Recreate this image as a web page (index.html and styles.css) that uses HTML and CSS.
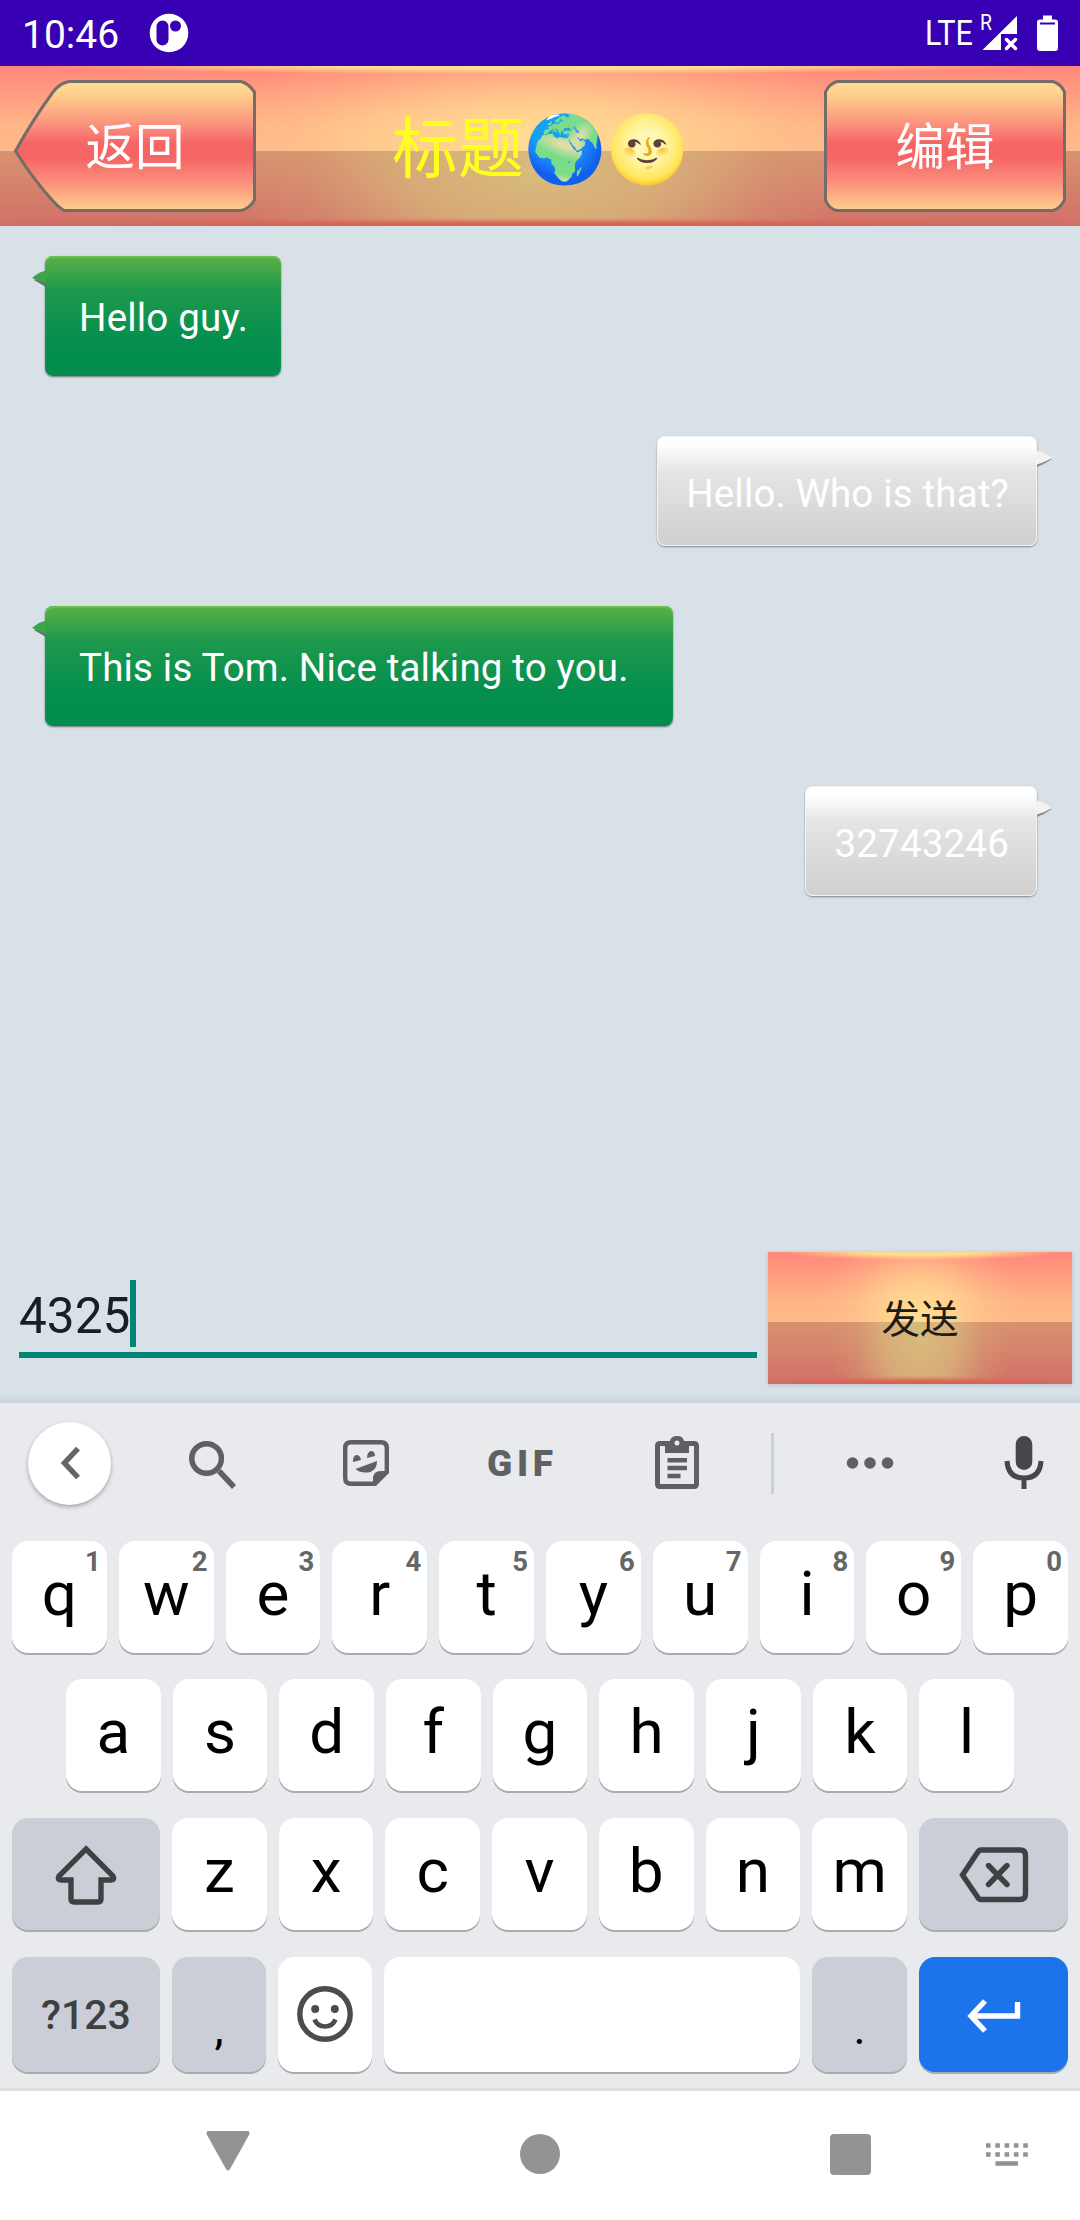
FILE: index.html
```html
<!DOCTYPE html>
<html lang="zh">
<head>
<meta charset="utf-8">
<title>标题</title>
<link rel="stylesheet" href="styles.css">
</head>
<body>
<div class="screen">
  <div class="status">
    <span class="clock">10:46</span>
    <svg class="app-icon" width="40" height="40" viewBox="0 0 40 40"><path fill="#fff" fill-rule="evenodd" d="M20 .7a19.3 19.3 0 1 0 0 38.600a19.300 19.300 0 1 0 0-38.600zM13.500 7.500a6 6 0 0 1 6 6v13a6 6 0 0 1-12 0v-13a6 6 0 0 1 6-6zM26.500 7.500a5.500 5.500 0 1 1 0 11a5.500 5.500 0 1 1 0-11z"/></svg>
    <svg class="status-right" width="144" height="66" viewBox="0 0 144 66" fill="#fff">
      <text x="1" y="44.500" font-size="34.500" textLength="48" lengthAdjust="spacingAndGlyphs">LTE</text>
      <text x="56" y="30" font-size="22" textLength="12" lengthAdjust="spacingAndGlyphs">R</text>
      <path d="M93 16V34H77V50H58.500z"/>
      <path d="M82.500 39.500l9 9m0-9l-9 9" stroke="#fff" stroke-width="3.500" stroke-linecap="round"/>
      <path d="M119 15.500h9v4h3q3 0 3 3V48q0 3-3 3h-15q-3 0-3-3V22.500q0-3 3-3h3z"/>
      <path d="M116 22.500h15v2h-15z" fill="#3700b3"/>
    </svg>
  </div>

  <div class="header glow">
    <div class="head-btn">
      <svg class="btn-shape" width="242" height="132" viewBox="0 0 242 132">
        <defs><linearGradient id="warm" x1="0" y1="0" x2="0" y2="1">
          <stop offset="0" stop-color="#ffd892"/><stop offset=".07" stop-color="#ffd68f"/><stop offset=".2" stop-color="#fdb586"/><stop offset=".35" stop-color="#fb8d7b"/><stop offset=".48" stop-color="#f56565"/><stop offset=".59" stop-color="#f56565"/><stop offset=".78" stop-color="#fb8f7c"/><stop offset="1" stop-color="#ffd08d"/>
        </linearGradient></defs>
        <path d="M55 1.500H227Q234 3 240.500 12V120Q235 129 227 130.500H50Q44 127 38 120Q16 95 1.500 71Q18 41 39 12Q46 3 55 1.500z" fill="url(#warm)" stroke="#736c68" stroke-width="3"/>
      </svg>
      <span class="btn-label">返回</span>
    </div>
    <div class="title"><span>标题</span>
      <span class="emoji">🌍</span><span class="emoji">🌝</span>
    </div>
    <div class="head-btn">
      <svg class="btn-shape" width="242" height="132" viewBox="0 0 242 132">
        <path d="M13 1.500H229Q237 4 240.500 12V120Q236 129 229 130.500H13Q5 129 1.500 120V12Q5 4 13 1.500z" fill="url(#warm)" stroke="#736c68" stroke-width="3"/>
      </svg>
      <span class="btn-label">编辑</span>
    </div>
  </div>

  <div class="chat">
    <div class="bubble in"><svg class="tail" width="15" height="18" viewBox="0 0 15 18"><path d="M15 3Q5 9 3 10L15 17z" fill="#66706c"/><path d="M15 1Q9 1 1 8L15 14z" fill="#3da449"/></svg>Hello guy.</div>
    <div class="bubble out"><svg class="tail" width="16" height="18" viewBox="0 0 16 18"><path d="M0 4L15 9Q8 14 0 17z" fill="#8b8f93"/><path d="M0 1Q7 2 15 8Q8 12 0 14.500z" fill="#f3f3f3"/></svg>Hello. Who is that?</div>
    <div class="bubble in long"><svg class="tail" width="15" height="18" viewBox="0 0 15 18"><path d="M15 3Q5 9 3 10L15 17z" fill="#66706c"/><path d="M15 1Q9 1 1 8L15 14z" fill="#3da449"/></svg>This is Tom. Nice talking to you.</div>
    <div class="bubble out"><svg class="tail" width="16" height="18" viewBox="0 0 16 18"><path d="M0 4L15 9Q8 14 0 17z" fill="#8b8f93"/><path d="M0 1Q7 2 15 8Q8 12 0 14.500z" fill="#f3f3f3"/></svg>32743246</div>
  </div>

  <div class="composer">
    <div class="input"><span>4325</span><i class="caret"></i></div>
    <div class="send glow">发送</div>
  </div>

  <div class="keyboard">
    <div class="tools">
      <div class="collapse"><svg width="24" height="36" viewBox="0 0 24 36"><path d="M20 3.500L6.500 18L20 32.500" fill="none" stroke="#666" stroke-width="5.500"/></svg></div>
      <svg width="50" height="52" viewBox="0 0 50 52" fill="none" stroke="#5f6062"><circle cx="18.600" cy="21.500" r="14.800" stroke-width="5.500"/><path d="M31 34L46 50" stroke-width="5.500"/></svg>
      <svg width="46" height="46" viewBox="0 0 46 46"><path d="M8 2.200H38Q43.800 2.200 43.800 8V32L32 43.800H8Q2.200 43.800 2.200 38V8Q2.200 2.200 8 2.200z" fill="none" stroke="#5f6062" stroke-width="4.400"/><path d="M30 45V39Q30 31 38 31H45L32 45z" fill="#5f6062"/><path d="M10 22Q9.500 16 13.500 15Q17 15 18 20zM24 18Q24 12 28 11Q32 11 32 16zM12.500 29L34 21Q34 29 27.500 32Q18 34 12.500 29z" fill="#5f6062"/></svg>
      <svg width="66" height="36" viewBox="0 0 66 36"><text class="gif" x="0" y="31" font-size="37" textLength="66" lengthAdjust="spacing">GIF</text></svg>
      <svg width="44" height="54" viewBox="0 0 44 54"><path fill-rule="evenodd" fill="#5f6062" d="M5 5H15Q16 0 22 0T29 5H39Q44 5 44 10V48Q44 53 39 53H5Q0 53 0 48V10Q0 5 5 5zM5 10V48H39V10H34V17H10V10zM22 4.500a2.500 2.500 0 1 0 0 5a2.500 2.500 0 1 0 0-5z"/><path d="M12.500 24.200H32M12.500 32H32M12.500 40H25.500" stroke="#5f6062" stroke-width="4.600"/></svg>
      <i class="divider"></i>
      <svg width="48" height="14" viewBox="0 0 48 14" fill="#5f6062"><circle cx="6.500" cy="7" r="5.800"/><circle cx="24" cy="7" r="5.800"/><circle cx="41.500" cy="7" r="5.800"/></svg>
      <svg class="mic" width="40" height="54" viewBox="0 0 40 54"><rect x="11.700" y="0" width="16.600" height="34" rx="8.300" fill="#46474a"/><path d="M3 25Q4 42 20 42T37 25M20 42V53" fill="none" stroke="#46474a" stroke-width="5"/></svg>
    </div>

    <div class="row ten">
      <div class="key">q<sup>1</sup></div><div class="key">w<sup>2</sup></div><div class="key">e<sup>3</sup></div><div class="key">r<sup>4</sup></div><div class="key">t<sup>5</sup></div><div class="key">y<sup>6</sup></div><div class="key">u<sup>7</sup></div><div class="key">i<sup>8</sup></div><div class="key">o<sup>9</sup></div><div class="key">p<sup>0</sup></div>
    </div>
    <div class="row nine">
      <div class="key">a</div><div class="key">s</div><div class="key">d</div><div class="key">f</div><div class="key">g</div><div class="key">h</div><div class="key">j</div><div class="key">k</div><div class="key">l</div>
    </div>
    <div class="row third">
      <div class="key icon dark"><svg width="62" height="62" viewBox="0 0 62 62"><path d="M31 5L58 32Q60 36 56 36H46V55Q46 58 43 58H19Q16 58 16 55V36H6Q2 36 4 32z" fill="none" stroke="#3f4042" stroke-width="5.400"/></svg></div>
      <div class="key">z</div><div class="key">x</div><div class="key">c</div><div class="key">v</div><div class="key">b</div><div class="key">n</div><div class="key">m</div>
      <div class="key icon dark"><svg width="70" height="56" viewBox="0 0 70 56" fill="none" stroke="#3f4042" stroke-width="5.400"><path d="M22 3H61Q66.500 3 66.500 8.500V47Q66.500 52.500 61 52.500H22Q20 52.500 18.500 50L3.500 28L18.500 5.500Q20 3 22 3z"/><path d="M29.500 18.500L48 37.500M48 18.500L29.500 37.500" stroke-linecap="round"/></svg></div>
    </div>
    <div class="row fourth">
      <div class="key icon dark sym">?123</div>
      <div class="key dark punct">,</div>
      <div class="key smile"><svg width="58" height="58" viewBox="0 0 58 58"><circle cx="29" cy="29" r="25.200" fill="none" stroke="#4b4c4e" stroke-width="5.400"/><circle cx="19.200" cy="24" r="4" fill="#4b4c4e"/><circle cx="38.800" cy="24" r="4" fill="#4b4c4e"/><path d="M18.500 34.500Q21.500 41.500 29 41.500T39.500 34.500" fill="none" stroke="#4b4c4e" stroke-width="4.600"/></svg></div>
      <div class="key"></div>
      <div class="key dark punct">.</div>
      <div class="key icon enter"><svg width="54" height="34" viewBox="0 0 54 34"><path d="M18 2L4 17L18 32M4.500 17H50.500V3" fill="none" stroke="#fff" stroke-width="5.400"/></svg></div>
    </div>
  </div>

  <div class="nav">
    <svg width="44" height="40" viewBox="0 0 44 40"><path d="M2 0H42Q44.500 1 43 4L24 38Q22 41 20 38L1 4Q-.5 1 2 0z" fill="#939393"/></svg>
    <svg width="40" height="46" viewBox="0 0 40 46"><circle cx="20" cy="23" r="20" fill="#939393"/></svg>
    <svg width="41" height="47" viewBox="0 0 41 47"><rect y="3" width="41" height="41" rx="4" fill="#939393"/></svg>
    <svg width="42" height="46" viewBox="0 0 42 46"><path d="M0 14.500H42M0 23.500H42" stroke="#939393" stroke-width="4.600" stroke-dasharray="4.600 4.700"/><path d="M9.500 32.500H32" stroke="#939393" stroke-width="4.600"/></svg>
  </div>
</div>
</body>
</html>
```
FILE: styles.css
```css
* { box-sizing: border-box; }
body { margin: 0; font-family: Roboto, "Noto Sans CJK SC", sans-serif; }
svg { display: block; flex: none; overflow: visible; }
.screen { width: 1080px; height: 2220px; display: flex; flex-direction: column; background: #d8e0e8; overflow: hidden; }

.status { height: 66px; flex: none; display: flex; align-items: center; background: #3700b3; color: #fff; padding-left: 22px; }
.clock { width: 127px; font-size: 39px; line-height: 66px; padding-top: 3px; }
.status-right { margin-left: auto; margin-right: 12px; }

.glow {
  background:
    radial-gradient(ellipse 46% 8px at 50% 0, #ffdc90 40%, rgba(255, 220, 144, 0)) no-repeat,
    radial-gradient(ellipse 60% 8px at 50% 100%, #d86152 30%, rgba(216, 97, 82, 0)) no-repeat,
    radial-gradient(ellipse 33% 125% at 50% 88%, #ffde92, rgba(255, 215, 144, .78) 35%, rgba(255, 200, 140, .35) 70%, rgba(255, 190, 137, 0)) 0 0 / 100% 53% no-repeat,
    radial-gradient(ellipse 30% 240% at 50% 20%, #d8bc7d, rgba(216, 180, 122, .8) 40%, rgba(214, 160, 116, .35) 72%, rgba(214, 140, 112, 0)) 0 100% / 100% 47% no-repeat,
    linear-gradient(#ff877a, #ffb587 70%, #ffb989) 0 0 / 100% 53% no-repeat,
    linear-gradient(#d8926f, #d27068) 0 100% / 100% 47% no-repeat;
}
.header { height: 160px; flex: none; display: flex; align-items: center; justify-content: space-between; padding: 0 14px; }
.head-btn { width: 242px; height: 132px; display: grid; }
.btn-shape, .btn-label { grid-area: 1 / 1; }
.btn-label { place-self: center; color: #fff; font-size: 49.5px; line-height: 60px; padding-top: 3px; position: relative; }
.title { display: flex; align-items: center; color: #ffff1e; font-size: 66px; line-height: 96px; padding-top: 7px; }
.emoji { font-family: "Noto Color Emoji", sans-serif; width: 82px; text-align: center; }

.chat { height: 1026px; flex: none; display: flex; flex-direction: column; gap: 60px; padding: 30px 43px 0 45px; }
.bubble { position: relative; color: #fff; font-size: 38.5px; letter-spacing: .18px; white-space: nowrap; border-radius: 8px; }
.in { align-self: flex-start; height: 120px; line-height: 124px; padding: 0 33px 0 34px; background: linear-gradient(#57af47, #47a848 10%, #1e994c 28%, #058f4e 70%, #008c4c); box-shadow: inset 0 2px 1px #6cc04c, 0 1px 2px #6b7270; }
.long { padding-right: 44px; }
.out { align-self: flex-end; height: 110px; line-height: 116px; padding: 0 28px 0 29px; background: linear-gradient(#fff 8%, #e5e5e5 32%, #cfcfcf); box-shadow: inset 0 0 0 1px #f2f3f4, 0 1px 2px #7f8488; }
.tail { position: absolute; top: 14px; }
.in .tail { left: -14px; }
.out .tail { right: -16px; }

.composer { height: 151px; flex: none; display: flex; justify-content: space-between; padding: 0 8px 0 19px; background: linear-gradient(rgba(200, 208, 214, 0) 143px, #ccd4da); }
.input { width: 738px; height: 106px; border-bottom: 6px solid #008577; display: flex; align-items: center; font-size: 49.5px; color: #1b1e20; padding-top: 22px; }
.input span { padding-top: 5px; }
.caret { width: 6px; height: 67px; background: #008577; }
.send { width: 304px; height: 132px; font-size: 38.5px; line-height: 135px; text-align: center; color: #201c15; box-shadow: 0 1px 4px rgba(0, 0, 0, .15); }

.keyboard { height: 688px; flex: none; background: #e8eaed; border-bottom: 3px solid #dfe1e0; padding: 0 12px; display: flex; flex-direction: column; gap: 27px; }
.tools { height: 111px; flex: none; margin: 0 -12px; display: grid; grid-template-columns: 139px 148px 158px 150px 164px 27px 167px 127px; align-items: center; justify-items: center; padding-top: 9px; }
.collapse { width: 83px; height: 83px; border-radius: 50%; background: #fff; box-shadow: 0 2px 4px rgba(0, 0, 0, .3); display: grid; place-items: center; }
.gif { font-weight: 900; fill: #5f6062; }
.divider { width: 3px; height: 61px; background: #cdd0d4; }
.mic { margin-left: 15px; }
.row { display: grid; gap: 12px; height: 112px; flex: none; grid-template-rows: 100%; }
.ten { grid-template-columns: repeat(10, 1fr); margin-bottom: -1px; }
.nine { grid-template-columns: repeat(9, 1fr); padding: 0 54px; }
.third { grid-template-columns: 148px repeat(7, 1fr) 149px; }
.fourth { grid-template-columns: 148px 94px 94px 1fr 95px 149px; height: 115px; }
.key { position: relative; background: #fff; border-radius: 16px; box-shadow: 0 2px 0 #a9abad; display: flex; justify-content: center; align-items: center; font-size: 62px; line-height: 100px; padding-bottom: 6px; color: #000; }
.key.icon { padding-bottom: 0; padding-top: 1px; }
.key.smile { padding-bottom: 2px; }
.key sup { position: absolute; top: 5px; right: 6px; font-size: 27.5px; line-height: 32px; font-weight: 700; color: #666; }
.key.dark { background: #cbced6; }
.sym { font-size: 41px; font-weight: 500; color: #3f4042; }
.key.punct { font-size: 46px; line-height: 60px; padding: 26px 0 0; }
.key.enter { background: #1b74eb; padding-top: 3px; }
.nav { flex: 1; display: flex; background: #fff; align-items: flex-start; padding: 40px 52px 0 206px; }
.nav svg:nth-child(2) { margin-left: 270px; }
.nav svg:nth-child(3) { margin-left: 270px; }
.nav svg:nth-child(4) { margin-left: auto; }
```
